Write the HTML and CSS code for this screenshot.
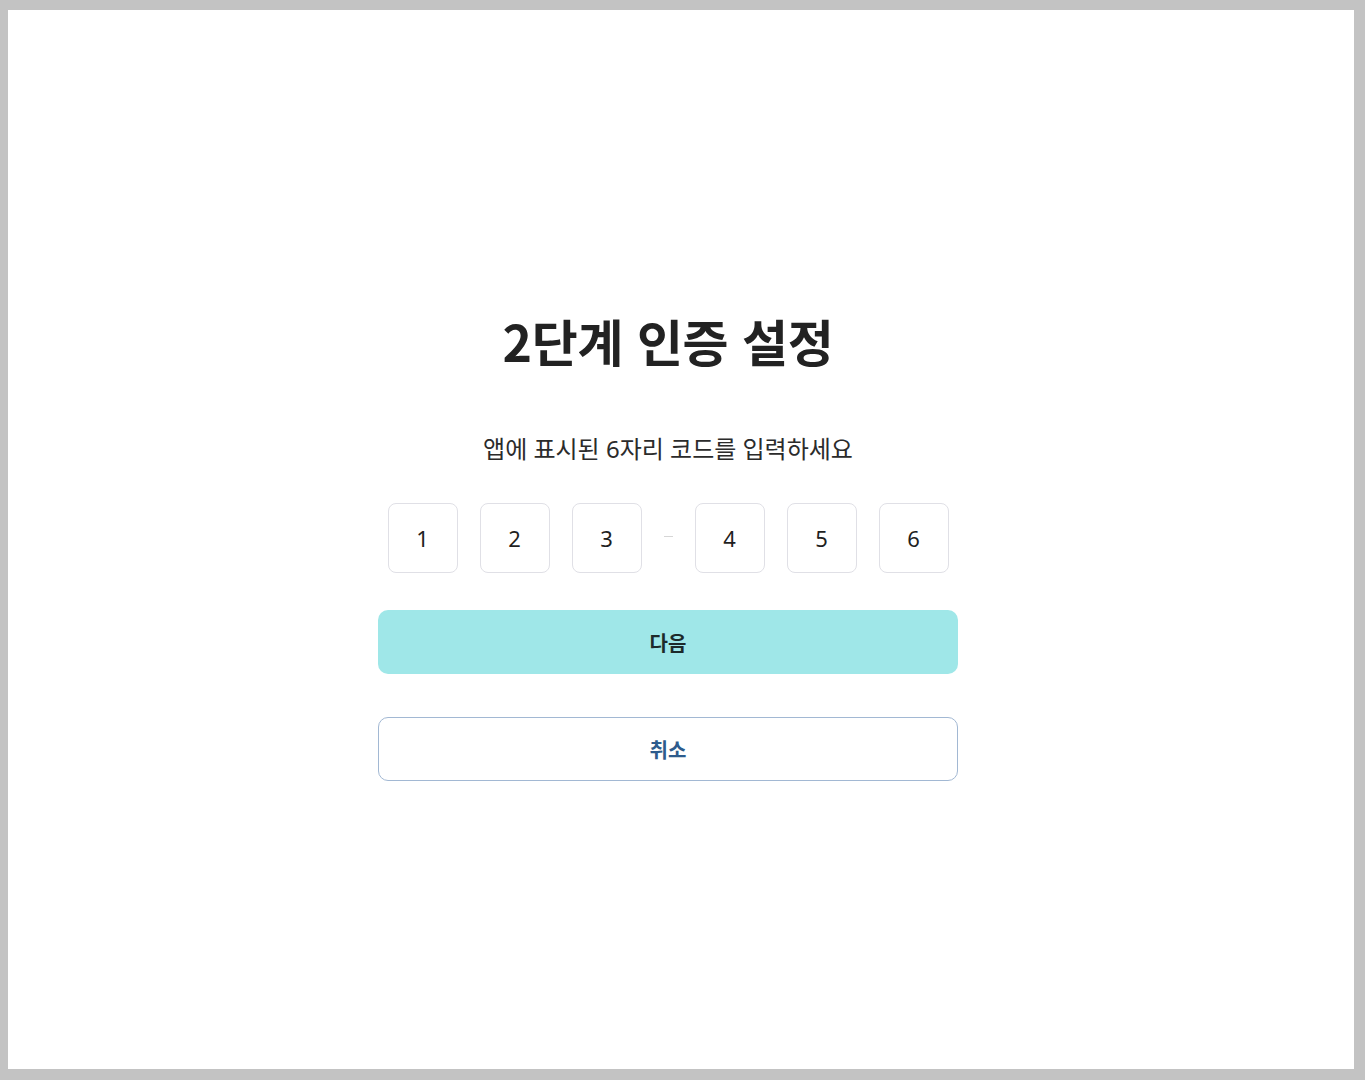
FILE: index.html
```html
<!DOCTYPE html>
<html lang="ko">
  <head>
    <meta charset="UTF-8" />
    <meta name="viewport" content="width=device-width, initial-scale=1.0" />
    <title>2단계 인증 설정</title>
    <link rel="stylesheet" href="styles.css">
  </head>
  <body>
    <div class="page">
      <div class="container">
        <h1>2단계 인증 설정</h1>

        <p class="hint">앱에 표시된 6자리 코드를 입력하세요</p>

        <div class="code">
          <input class="digit" type="text" maxlength="1" value="1" />
          <input class="digit" type="text" maxlength="1" value="2" />
          <input class="digit" type="text" maxlength="1" value="3" />
          <span class="dash"></span>
          <input class="digit" type="text" maxlength="1" value="4" />
          <input class="digit" type="text" maxlength="1" value="5" />
          <input class="digit" type="text" maxlength="1" value="6" />
        </div>

        <button class="btn btn-primary">다음</button>
        <button class="btn btn-outline">취소</button>
      </div>
    </div>
  </body>
</html>
```

FILE: styles.css
```css
html {
  background-color: #c3c3c3;
}

body {
  margin: 0;
  font-family: "Noto Sans", "Noto Sans CJK KR", sans-serif;
  color: #222;
}

.page {
  background-color: #fff;
  margin: 10px 11px 11px 8px;
  height: calc(100vh - 21px);
  box-sizing: border-box;
  display: flex;
  justify-content: center;
  padding-right: 26px;
  padding-top: 300px;
}

.container {
  width: 580px;
  display: flex;
  flex-direction: column;
  align-items: center;
}

h1 {
  margin: 0;
  font-family: "Noto Sans CJK KR", sans-serif;
  font-size: 50px;
  font-weight: 700;
  line-height: 60px;
  color: #222;
  letter-spacing: -0.3px;
}

.hint {
  margin: 63px 0 0;
  font-size: 24px;
  line-height: 32px;
  color: #2b2b2b;
}

.code {
  display: flex;
  align-items: center;
  gap: 22px;
  margin-top: 38px;
}

.digit {
  width: 70px;
  height: 70px;
  box-sizing: border-box;
  border: 1px solid #e0e0e6;
  border-radius: 8px;
  text-align: center;
  font-family: "Noto Sans", sans-serif;
  font-size: 22px;
  color: #1f1f1f;
  padding: 0;
  background: #fff;
}

.dash {
  width: 9px;
  height: 1px;
  background-color: #d6d6d6;
  margin-top: -4px;
}

.btn {
  width: 580px;
  height: 64px;
  border-radius: 10px;
  font-family: "Noto Sans CJK KR", sans-serif;
  font-size: 20px;
  font-weight: 600;
  cursor: pointer;
}

.btn-primary {
  margin-top: 37px;
  background-color: #9fe7e8;
  border: none;
  color: #1d2a2a;
}

.btn-outline {
  margin-top: 43px;
  background-color: #fff;
  border: 1.5px solid #a2b8d3;
  color: #2d5b8c;
}
```
